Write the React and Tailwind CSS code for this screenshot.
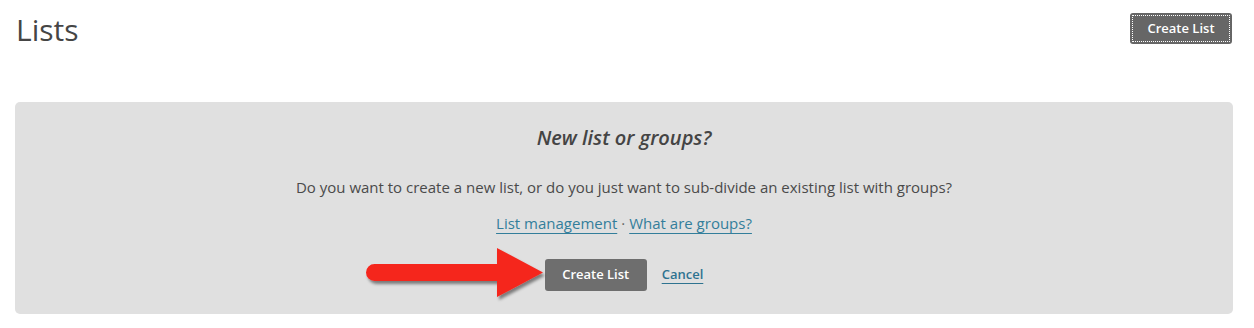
import React from "react";

function Arrow() {
  return (
    <svg
      className="absolute left-[349px] top-[144px]"
      width="190"
      height="60"
      viewBox="-2 -2 190 60"
    >
      <defs>
        <filter id="sh" x="-10%" y="-20%" width="130%" height="150%">
          <feDropShadow dx="2" dy="3" stdDeviation="1.6" floodColor="#000" floodOpacity="0.45" />
        </filter>
      </defs>
      <path
        d="M8.5 16 H131 V0 L177 24.5 L131 49 V33 H8.5 A8.5 8.5 0 0 1 8.5 16 Z"
        fill="#f5261f"
        filter="url(#sh)"
      />
    </svg>
  );
}

export default function App() {
  return (
    <div
      className="w-[1254px] h-[328px] bg-white pl-[15px] pr-[21px] pt-[13px]"
      style={{ fontFamily: '"Open Sans", "Liberation Sans", sans-serif' }}
    >
      <div className="flex items-start justify-between">
        <h1 className="text-[30px] leading-[36px] text-[#454545] font-normal ml-[1px] -mt-[1px]">Lists</h1>
        <button className="h-[31px] w-[102px] rounded-[3px] bg-[#666666] text-white text-[13px] font-semibold outline-1 outline-dotted outline-white -outline-offset-[3px] mr-[1px]">
          Create List
        </button>
      </div>
      <div className="relative mt-[54px] h-[212px] rounded-[5px] bg-[#e0e0e0] flex flex-col items-center pt-[22px]">
        <h2 className="text-[20px] leading-[28px] italic font-semibold text-[#444444]">New list or groups?</h2>
        <p className="mt-[25px] text-[15px] leading-[20px] text-[#4a4a4a]">
          Do you want to create a new list, or do you just want to sub-divide an existing list with groups?
        </p>
        <p className="mt-[15px] text-[15px] leading-[22px] text-[#666]">
          <a className="text-[#337e9b] underline underline-offset-[4px] decoration-1">List management</a>
          <span className="mx-[4px]">·</span>
          <a className="text-[#337e9b] underline underline-offset-[4px] decoration-1">What are groups?</a>
        </p>
        <div className="mt-[25px] flex items-center gap-[15px]">
          <button className="h-[32px] w-[102px] rounded-[3px] bg-[#6e6e6e] text-white text-[13px] font-semibold">
            Create List
          </button>
          <a className="text-[13px] font-semibold text-[#2e7390] underline underline-offset-[4px] decoration-1">Cancel</a>
        </div>
        <Arrow />
      </div>
    </div>
  );
}
